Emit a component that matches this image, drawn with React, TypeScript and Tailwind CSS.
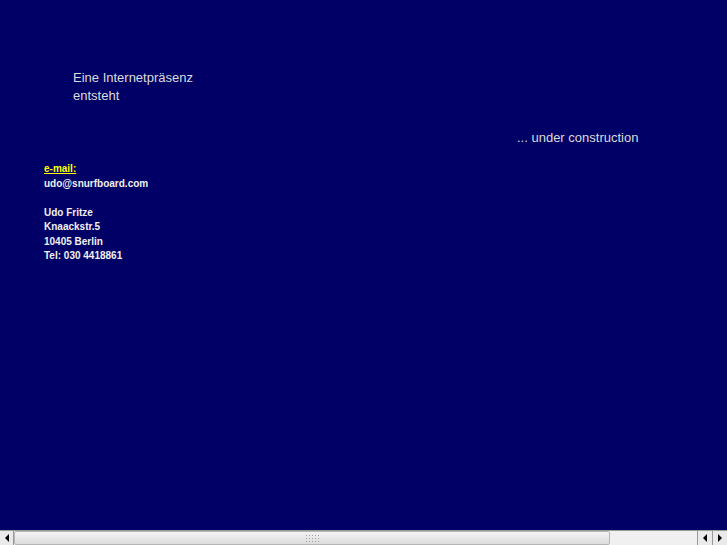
export default function App() {
  return (
    <div className="flex h-[545px] w-[727px] flex-col overflow-hidden bg-[#000066] font-['Liberation_Sans',Arial,sans-serif]">
      <div className="flex-1">
        <div className="pl-[73px] pt-[69px] text-[13px] leading-[18px] text-[#dcdcdc]">
          <p>Eine Internetpräsenz</p>
          <p>entsteht</p>
        </div>
        <p className="mt-[24px] pl-[517px] text-[13px] leading-[18px] text-[#dcdcdc]">
          ... under construction
        </p>
        <div className="mt-[15px] pl-[44px] text-[10px] font-bold leading-[14.5px] text-[#f0f0f0]">
          <a href="#" className="text-[#ffff00] underline">
            e-mail:
          </a>
          <p>udo@snurfboard.com</p>
          <p>&nbsp;</p>
          <p>Udo Fritze</p>
          <p>Knaackstr.5</p>
          <p>10405 Berlin</p>
          <p>Tel: 030 4418861</p>
        </div>
      </div>
      <div className="flex h-[15px] items-stretch border-t border-[#9a9a9a] bg-[#f2f2f2]">
        <div className="flex w-[14px] items-center justify-center border-r border-[#9a9a9a] bg-[#eaeaea]">
          <span className="h-0 w-0 border-y-[4px] border-r-[4px] border-y-transparent border-r-black" />
        </div>
        <div className="flex w-[596px] items-center justify-center rounded-[2px] border border-[#b5b5b5] bg-gradient-to-b from-[#f4f4f4] to-[#dcdcdc]">
          <div className="grid grid-cols-5 gap-x-[2px] gap-y-[2px]">
            {Array.from({ length: 15 }).map((_, i) => (
              <span key={i} className="h-[1px] w-[1px] bg-[#a0a0a0]" />
            ))}
          </div>
        </div>
        <div className="flex-1 bg-[#f0f0f0]" />
        <div className="flex w-[15px] items-center justify-center border-l border-[#9a9a9a] bg-[#eaeaea]">
          <span className="h-0 w-0 border-y-[4px] border-r-[4px] border-y-transparent border-r-black" />
        </div>
        <div className="flex w-[15px] items-center justify-center border-l border-[#9a9a9a] bg-[#eaeaea]">
          <span className="h-0 w-0 border-y-[4px] border-l-[4px] border-y-transparent border-l-black" />
        </div>
      </div>
    </div>
  );
}
